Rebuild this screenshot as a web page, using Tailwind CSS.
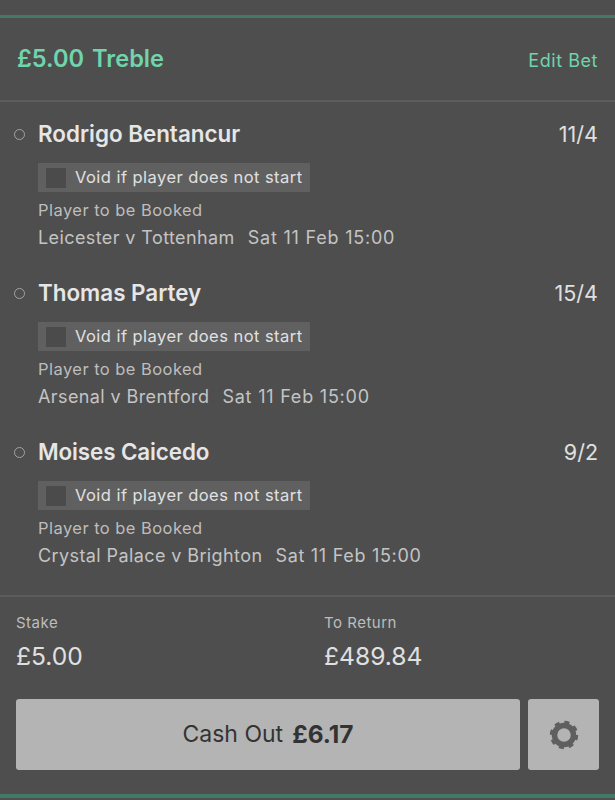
<!DOCTYPE html>
<html lang="en">
<head>
  <meta charset="UTF-8" />
  <title>Treble</title>
  <script src="https://cdn.jsdelivr.net/npm/@tailwindcss/browser@4"></script>
</head>
<body class="bg-[#4e4e4e] font-['Inter','Liberation_Sans',sans-serif] text-[#e6e6e6]">
  <main class="w-[615px] h-[800px] overflow-hidden flex flex-col pt-[15px]">
    <div class="h-[3px] bg-[#437a65]"></div>

    <!-- Header -->
    <header class="h-[82px] flex items-center justify-between pl-[17px] pr-[17px]">
      <h1 class="text-[23.6px] font-semibold text-[#70d4ac] flex gap-[8px] leading-none"><span>£5.00</span><span>Treble</span></h1>
      <a class="text-[18px] tracking-[0.55px] text-[#70d4ac] mt-[3px]">Edit Bet</a>
    </header>
    <div class="h-[2px] bg-[#5c5c5c]"></div>

    <!-- Selections -->
    <section class="h-[493px] pt-[19px] flex flex-col">
      <div class="h-[159px] shrink-0 pl-[14px] pr-[17px]">
        <div class="flex items-center h-[26px]">
          <span class="w-[11px] h-[11px] rounded-full border-[1.5px] border-[#a3a3a3]"></span>
          <span class="ml-[13px] text-[22.4px] font-semibold flex-1">Rodrigo Bentancur</span>
          <span class="text-[21.5px] text-[#e0e0e0]">11/4</span>
        </div>
        <div class="ml-[24px] mt-[16px] w-[272px] h-[29px] bg-[#606060] flex items-center pl-2">
          <span class="w-[20px] h-[20px] bg-[#4b4b4b]"></span>
          <span class="ml-[9px] text-[16.5px] tracking-[0.45px] text-[#e0e0e0]">Void if player does not start</span>
        </div>
        <p class="ml-[24px] mt-[6px] text-[16.5px] tracking-[0.45px] leading-[24px] text-[#bdbdbd]">Player to be Booked</p>
        <p class="ml-[24px] mt-[3px] text-[18px] tracking-[0.4px] leading-[26px] text-[#c4c4c4] flex gap-[13px]"><span>Leicester v Tottenham</span><span class="tracking-[0.78px]">Sat 11 Feb 15:00</span></p>
      </div>
      <div class="h-[159px] shrink-0 pl-[14px] pr-[17px]">
        <div class="flex items-center h-[26px]">
          <span class="w-[11px] h-[11px] rounded-full border-[1.5px] border-[#a3a3a3]"></span>
          <span class="ml-[13px] text-[22.4px] font-semibold flex-1">Thomas Partey</span>
          <span class="text-[21.5px] text-[#e0e0e0]">15/4</span>
        </div>
        <div class="ml-[24px] mt-[16px] w-[272px] h-[29px] bg-[#606060] flex items-center pl-2">
          <span class="w-[20px] h-[20px] bg-[#4b4b4b]"></span>
          <span class="ml-[9px] text-[16.5px] tracking-[0.45px] text-[#e0e0e0]">Void if player does not start</span>
        </div>
        <p class="ml-[24px] mt-[6px] text-[16.5px] tracking-[0.45px] leading-[24px] text-[#bdbdbd]">Player to be Booked</p>
        <p class="ml-[24px] mt-[3px] text-[18px] tracking-[0.4px] leading-[26px] text-[#c4c4c4] flex gap-[13px]"><span>Arsenal v Brentford</span><span class="tracking-[0.78px]">Sat 11 Feb 15:00</span></p>
      </div>
      <div class="h-[156px] shrink-0 pl-[14px] pr-[17px]">
        <div class="flex items-center h-[26px]">
          <span class="w-[11px] h-[11px] rounded-full border-[1.5px] border-[#a3a3a3]"></span>
          <span class="ml-[13px] text-[22.4px] tracking-[-0.1px] font-semibold flex-1">Moises Caicedo</span>
          <span class="text-[21.5px] text-[#e0e0e0]">9/2</span>
        </div>
        <div class="ml-[24px] mt-[16px] w-[272px] h-[29px] bg-[#606060] flex items-center pl-2">
          <span class="w-[20px] h-[20px] bg-[#4b4b4b]"></span>
          <span class="ml-[9px] text-[16.5px] tracking-[0.45px] text-[#e0e0e0]">Void if player does not start</span>
        </div>
        <p class="ml-[24px] mt-[6px] text-[16.5px] tracking-[0.45px] leading-[24px] text-[#bdbdbd]">Player to be Booked</p>
        <p class="ml-[24px] mt-[3px] text-[18px] tracking-[0.4px] leading-[26px] text-[#c4c4c4] flex gap-[13px]"><span>Crystal Palace v Brighton</span><span class="tracking-[0.7px]">Sat 11 Feb 15:00</span></p>
      </div>
    </section>
    <div class="h-[2px] bg-[#5c5c5c]"></div>

    <!-- Stake / return -->
    <section class="pl-4 pt-[15px] flex h-[102px]">
      <div class="w-[308px]">
        <p class="text-[15px] tracking-[0.5px] leading-[22px] text-[#bdbdbd]">Stake</p>
        <p class="mt-[7px] text-[24.6px] leading-[30px] text-[#e0e0e0]">£5.00</p>
      </div>
      <div>
        <p class="text-[15px] tracking-[0.5px] leading-[22px] text-[#bdbdbd]">To Return</p>
        <p class="mt-[7px] text-[24.6px] leading-[30px] text-[#e0e0e0]">£489.84</p>
      </div>
    </section>

    <!-- Actions -->
    <div class="pl-4 pr-4 flex gap-2 h-[71px]">
      <button class="w-[504px] h-full bg-[#b4b4b4] rounded-[3px] text-[#333333] text-[23px] flex items-center justify-center gap-[9px]">
        <span>Cash Out</span><span class="font-bold text-[24.4px]">£6.17</span>
      </button>
      <button class="w-[71px] h-full bg-[#b4b4b4] rounded-[3px] flex items-center justify-center">
        <svg width="30" height="30" viewBox="0 0 30 30" fill="none">
          <circle cx="15" cy="15" r="9.5" stroke="#5f5f5f" stroke-width="5.5"/>
          <circle cx="15" cy="15" r="12.4" stroke="#5f5f5f" stroke-width="3.6" stroke-dasharray="4.9 4.84"/>
        </svg>
      </button>
    </div>

    <div class="mt-[24px] h-[3.5px] bg-[#437a65]"></div>
  </main>
</body>
</html>
